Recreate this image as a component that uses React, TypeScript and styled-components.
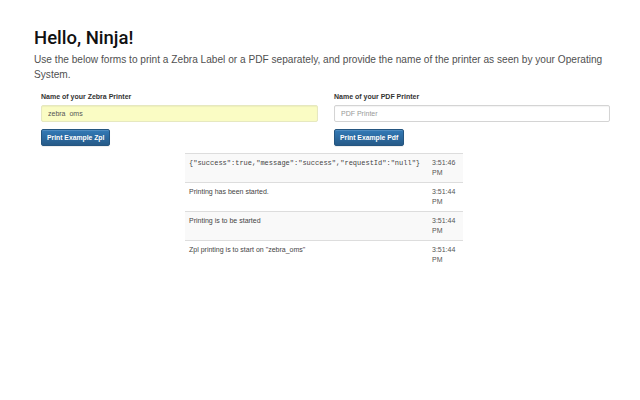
import React from "react";
import styled, { createGlobalStyle } from "styled-components";

const Global = createGlobalStyle`
  html, body { margin: 0; padding: 0; background: #fff; }
  body { font-family: "Liberation Sans", Arial, sans-serif; color: #333; }
  * { box-sizing: border-box; }
`;

const Page = styled.div`
  padding: 28px 0 0 34px;
  width: 640px;
`;

const Title = styled.h1`
  margin: 0;
  font-family: Roboto, "Liberation Sans", Arial, sans-serif;
  font-size: 18.5px;
  line-height: 21px;
  font-weight: 500;
  color: #111;
`;

const Lead = styled.p`
  margin: 3px 0 0;
  width: 580px;
  font-size: 10.15px;
  line-height: 15px;
  color: #505050;
`;

const FormRow = styled.div`
  display: grid;
  grid-template-columns: 277px 276px;
  column-gap: 16px;
  margin: 10px 0 0 7px;
`;

const Field = styled.div`
  display: flex;
  flex-direction: column;
  align-items: flex-start;
`;

const Label = styled.label`
  font-size: 7px;
  line-height: 10px;
  font-weight: bold;
  color: #333;
  margin-bottom: 3px;
`;

const Input = styled.input<{ $filled?: boolean }>`
  width: 100%;
  height: 17px;
  padding: 2px 6px;
  font-family: "Liberation Sans", Arial, sans-serif;
  font-size: 7px;
  line-height: 11px;
  color: #555;
  background: ${(p) => (p.$filled ? "#fafcc4" : "#fff")};
  border: 1px solid ${(p) => (p.$filled ? "#e6e8c0" : "#d4d4d4")};
  border-radius: 2px;
  box-shadow: inset 0 1px 1px rgba(0, 0, 0, 0.05);
  outline: none;
  &::placeholder { color: #999; }
`;

const Button = styled.button`
  margin-top: 7px;
  height: 17px;
  padding: 0 5px;
  font-family: "Liberation Sans", Arial, sans-serif;
  font-size: 6.8px;
  font-weight: bold;
  color: #fff;
  background: linear-gradient(to bottom, #337ab7 0%, #265a88 100%);
  border: 1px solid #245580;
  border-radius: 2px;
  box-shadow: inset 0 1px 0 rgba(255, 255, 255, 0.15), 0 1px 1px rgba(0, 0, 0, 0.075);
  cursor: pointer;
`;

const LogTable = styled.table`
  margin: 7px 0 0 151px;
  width: 278px;
  border-collapse: collapse;
  font-size: 7px;
  line-height: 10px;
  color: #444;
`;

const Row = styled.tr<{ $striped?: boolean }>`
  background: ${(p) => (p.$striped ? "#f9f9f9" : "#fff")};
`;

const Cell = styled.td<{ $mono?: boolean; $time?: boolean }>`
  padding: 4px;
  height: 29px;
  vertical-align: top;
  border-top: 1px solid #ddd;
  font-family: ${(p) =>
    p.$mono ? '"Liberation Mono", "DejaVu Sans Mono", monospace' : '"Liberation Sans", Arial, sans-serif'};
  width: ${(p) => (p.$time ? "35px" : "auto")};
  color: ${(p) => (p.$time ? "#555" : "#444")};
`;

const logs = [
  { msg: '{"success":true,"message":"success","requestId":"null"}', time: "3:51:46 PM", mono: true },
  { msg: "Printing has been started.", time: "3:51:44 PM" },
  { msg: "Printing is to be started", time: "3:51:44 PM" },
  { msg: 'Zpl printing is to start on "zebra_oms"', time: "3:51:44 PM" },
];

export default function App() {
  return (
    <>
      <Global />
      <Page>
        <Title>Hello, Ninja!</Title>
        <Lead>
          Use the below forms to print a Zebra Label or a PDF separately, and provide the name of the printer as
          seen by your Operating System.
        </Lead>
        <FormRow>
          <Field>
            <Label>Name of your Zebra Printer</Label>
            <Input $filled defaultValue="zebra_oms" />
            <Button>Print Example Zpl</Button>
          </Field>
          <Field>
            <Label>Name of your PDF Printer</Label>
            <Input placeholder="PDF Printer" />
            <Button>Print Example Pdf</Button>
          </Field>
        </FormRow>
        <LogTable>
          <tbody>
            {logs.map((l, i) => (
              <Row key={i} $striped={i % 2 === 0}>
                <Cell $mono={l.mono}>{l.msg}</Cell>
                <Cell $time>{l.time}</Cell>
              </Row>
            ))}
          </tbody>
        </LogTable>
      </Page>
    </>
  );
}
